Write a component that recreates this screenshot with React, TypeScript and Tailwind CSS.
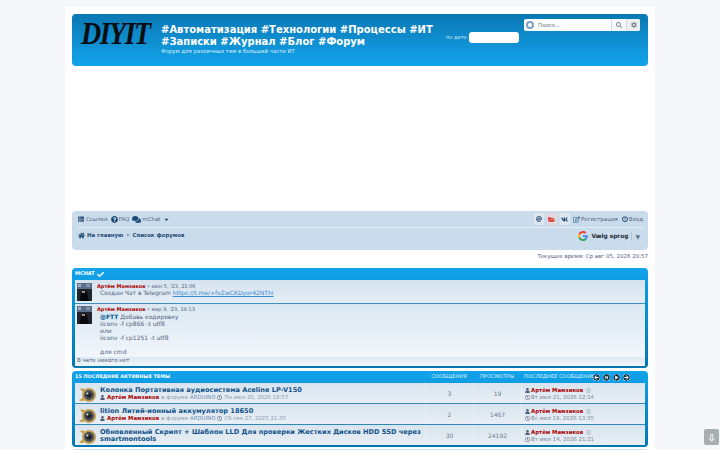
import { FaThList, FaQuestionCircle, FaComments, FaCaretDown, FaHome, FaAt, FaFolderOpen, FaVk, FaRegEdit, FaPowerOff, FaUser, FaRegClock, FaCheck, FaSearch, FaCog, FaRegFileAlt, FaArrowCircleLeft, FaArrowCircleRight, FaPauseCircle, FaPlayCircle } from "react-icons/fa";

const font = "font-['DejaVu_Sans',sans-serif]";

const Avatar = () => (
  <svg width="15" height="18" viewBox="0 0 15 18" className="shrink-0">
    <rect width="15" height="18" fill="#20242c" />
    <rect width="15" height="6" fill="#5d6f88" />
    <rect x="1" y="1" width="3" height="3" fill="#9fb0c6" />
    <rect x="9" y="1" width="4" height="3" fill="#8296b0" />
    <path d="M3 18 L4 10 Q7 5 10 9 L12 18 Z" fill="#07080c" />
    <rect x="5" y="8" width="3" height="2" fill="#a58f80" />
  </svg>
);

const TopicIcon = () => (
  <svg width="17" height="16" viewBox="0 0 17 16" className="shrink-0">
    <path d="M1 2 Q4 0 6 3 L5 6 Z" fill="#c9a24a" />
    <path d="M0 13 Q4 16 6 12 L5 10 Z" fill="#c9a24a" />
    <circle cx="10" cy="8" r="7" fill="#bd9c58" />
    <circle cx="10" cy="8" r="5" fill="#4a4f52" />
    <circle cx="10" cy="8" r="2.500" fill="#1b2026" />
    <circle cx="8.500" cy="6.500" r="1" fill="#dfe7ee" />
  </svg>
);

const Author = () => <span className="font-bold text-[#aa0000]">Артём Мамзиков</span>;

const chatGrad = "bg-gradient-to-b from-[#dbe7f1] to-[#f1f6fa]";

const topics = [
  { title: "Колонка Портативная аудиосистема Aceline LP-V150", date: "Пн июл 20, 2026 18:57", replies: 3, views: 19, last: "Вт июл 21, 2026 12:14" },
  { title: "lition Литий-ионный аккумулятор 18650", date: "Сб сен 27, 2025 21:35", replies: 2, views: 1467, last: "Вс июл 19, 2026 13:35" },
  { title: "Обновленный Скрипт + Шаблон LLD Для проверки Жестких Дисков HDD SSD через smartmontools", date: "", replies: 30, views: 24192, last: "Вт июл 14, 2026 21:21" },
];

export default function App() {
  return (
    <div className={`relative h-[450px] overflow-hidden bg-[#f5f7fa] pt-[7px] ${font}`}>
      <div className="mx-auto flex h-[460px] w-[590px] flex-col bg-white px-[7px] pt-[7px]">
        {/* header */}
        <header className="flex h-[52px] shrink-0 rounded-[4px] bg-gradient-to-b from-[#0b78b3] to-[#13a4ec] pl-[9px] pr-[8px]">
          <div className="mt-[3px] w-[80px] shrink-0 origin-center scale-y-[1.15] font-['Liberation_Serif',serif] text-[28px] font-bold italic leading-[36px] tracking-[-1.5px] text-[#0a0d12]">
            DIYIT
          </div>
          <div className="w-[285px] shrink-0 pt-[10px] text-white">
            <div className="whitespace-nowrap text-[10px] font-bold leading-[12px]">#Автоматизация #Технологии #Процессы #ИТ</div>
            <div className="whitespace-nowrap text-[10px] font-bold leading-[12px]">#Записки #Журнал #Блог #Форум</div>
            <div className="text-[5.4px] leading-[6px] text-[#dcefff]">Форум для различных тем в большей части ИТ</div>
          </div>
          <div className="mt-[18px] flex h-[11px] w-[73px] shrink-0 items-center justify-between">
            <span className="whitespace-nowrap text-[5px] text-[#d6ebfa]">по дате:</span>
            <div className="h-[11px] w-[50px] rounded-[3px] bg-white" />
          </div>
          <div className="ml-[5px] mt-[5px] flex h-[12px] w-[116px] items-center overflow-hidden rounded-[2px] bg-white text-[#6d7d8d]">
            <span className="ml-[2px] h-[8px] w-[8px] rounded-full border-[2px] border-[#7f9fc6]" />
            <span className="ml-[4px] flex-1 text-[5.5px]">Поиск...</span>
            <span className="flex h-full w-[15px] items-center justify-center border-l border-[#d5dde4] bg-[#f7f8f9]"><FaSearch className="h-[6px] w-[6px] text-[#7a8794]" /></span>
            <span className="flex h-full w-[14px] items-center justify-center border-l border-[#d5dde4] bg-[#eceff2]"><FaCog className="h-[6px] w-[6px] text-[#7a8794]" /></span>
          </div>
        </header>

        <div className="h-[145px] shrink-0" />

        {/* nav */}
        <nav className="h-[39px] shrink-0 rounded-[4px] bg-[#cadceb] pl-[6px] pr-[5px] text-[5.5px] text-[#536482]">
          <div className="flex h-[17px] items-center border-b border-[#e6eff6]">
            <span className="flex items-center gap-[2px]"><FaThList className="h-[6px] w-[6px] text-[#30507a]" />Ссылки</span>
            <span className="ml-[3px] flex items-center gap-[1px]"><FaQuestionCircle className="h-[7px] w-[7px] text-[#1b4a75]" />FAQ</span>
            <span className="ml-[3px] flex items-center gap-[1px]"><FaComments className="h-[9px] w-[9px] text-[#1b4a75]" />mChat<FaCaretDown className="ml-[1px] h-[7px] w-[7px] text-[#1b4a75]" /></span>
            <span className="ml-auto flex h-[12px] w-[10px] items-center justify-center bg-[#dde7f0]"><FaAt className="h-[6px] w-[6px] text-[#34547a]" /></span>
            <span className="ml-[3px] flex h-[12px] w-[10px] items-center justify-center bg-[#e3d9dc]"><FaFolderOpen className="h-[7px] w-[7px] text-[#d9352c]" /></span>
            <span className="ml-[3px] flex h-[12px] w-[10px] items-center justify-center bg-[#dde7f0]"><FaVk className="h-[7px] w-[7px] text-[#1f4c78]" /></span>
            <span className="ml-[3px] flex items-center gap-[1px]"><FaRegEdit className="h-[7px] w-[7px] text-[#2c5e90]" />Регистрация</span>
            <span className="ml-[4px] flex items-center gap-[1px]"><FaPowerOff className="h-[6px] w-[6px] text-[#1b4a75]" />Вход</span>
          </div>
          <div className="flex items-start justify-between pt-[3px]">
            <span className="flex items-center gap-[2px] text-[5.4px] font-bold text-[#1b4a75]"><FaHome className="h-[7px] w-[7px]" />На главную<span className="mx-[1px] font-normal">•</span>Список форумов</span>
            <span className="mr-[3px] flex items-center text-[5.8px] font-bold text-[#1f2b38]">
              <svg width="10" height="10" viewBox="0 0 48 48" className="mr-[3px]">
                <path fill="#EA4335" d="M24 9.500c3.500 0 6.700 1.200 9.200 3.600l6.900-6.900C35.900 2.400 30.500 0 24 0 14.600 0 6.500 5.400 2.600 13.200l8 6.200C12.500 13.700 17.800 9.500 24 9.500z" />
                <path fill="#4285F4" d="M47 24.500c0-1.600-.1-3.100-.4-4.500H24v9h12.900c-.6 3-2.200 5.500-4.700 7.200l7.700 6C44.400 38 47 31.800 47 24.500z" />
                <path fill="#FBBC05" d="M10.500 28.600C10 27.200 9.700 25.600 9.700 24s.3-3.200.8-4.600l-8-6.200C.9 16.400 0 20.100 0 24s.9 7.600 2.600 10.800l7.900-6.200z" />
                <path fill="#34A853" d="M24 48c6.500 0 11.900-2.100 15.900-5.800l-7.700-6c-2.200 1.500-4.900 2.300-8.200 2.300-6.200 0-11.500-4.200-13.400-9.900l-8 6.200C6.500 42.600 14.600 48 24 48z" />
              </svg>
              Vælg sprog
              <span className="ml-[3px] border-l border-[#b5c5d3] pl-[3px] text-[6px] font-normal text-[#667788]">▼</span>
            </span>
          </div>
        </nav>

        <div className="mt-[2px] h-[16px] shrink-0 text-right text-[5.5px] leading-[8px] text-[#536482]">Текущее время: Ср авг 05, 2026 20:57</div>

        {/* mchat */}
        <section className="h-[100px] shrink-0 rounded-[4px] bg-gradient-to-b from-[#12a3eb] to-[#0076b1] px-[3px]">
          <div className="flex h-[12px] items-center gap-[2px] text-[5px] font-bold text-white">
            MCHAT <FaCheck className="h-[7px] w-[7px]" />
          </div>
          <div className="h-[86px] bg-[#dfe9f2] text-[#536482]">
            <div className="flex h-[24px] gap-[5px] border-b border-[#3e8fb8] bg-gradient-to-b from-[#d6e3ef] to-[#e4edf5] pl-[2px] pt-[3px]">
              <Avatar />
              <div className="leading-[7px]">
                <div className="text-[5px]"><Author /> • июн 5, '23, 21:06</div>
                <div className="ml-[3px] -mt-[1px] text-[6px]">Создан Чат в Telegram <span className="text-[#368ad2] underline">https://t.me/+fvZwCKDyor42NThi</span></div>
              </div>
            </div>
            <div className={`flex h-[53px] gap-[5px] ${chatGrad} pl-[2px] pt-[2px]`}>
              <Avatar />
              <div className="leading-[7px]">
                <div className="text-[5px]"><Author /> • мар 9, '23, 19:13</div>
                <div className="ml-[3px] text-[6px]">
                  <div><span className="bg-[#d0e8f8] font-bold text-[#105289]">@FTT</span> Добавь кодировку</div>
                  <div>iiconv -f cp866 -t utf8</div>
                  <div>или</div>
                  <div>iiconv -f cp1251 -t utf8</div>
                  <div className="h-[7px]" />
                  <div>для cmd</div>
                </div>
              </div>
            </div>
            <div className={`h-[9px] pl-[2px] text-[5.5px] leading-[7px] text-[#4c5d77] ${chatGrad}`}>В чате никого нет</div>
          </div>
        </section>

        {/* topics */}
        <section className="mt-[3px] h-[76px] shrink-0 rounded-[4px] bg-gradient-to-b from-[#12a3eb] to-[#0076b1] px-[3px]">
          <div className="flex h-[12px] items-center text-[5.2px] text-[#d8edfa]">
            <span className="w-[350px] text-[4.9px] font-bold text-white">15 ПОСЛЕДНИЕ АКТИВНЫЕ ТЕМЫ</span>
            <span className="w-[48px] text-center">СООБЩЕНИЯ</span>
            <span className="w-[48px] text-center">ПРОСМОТРЫ</span>
            <span className="ml-[3px] w-[69px] overflow-hidden whitespace-nowrap">ПОСЛЕДНЕЕ СООБЩЕНИЕ</span>
            <span className="flex gap-[3px] text-[#12384f]">
              <FaArrowCircleLeft className="h-[7px] w-[7px] rounded-full bg-white" />
              <FaPauseCircle className="h-[7px] w-[7px] rounded-full bg-white" />
              <FaPlayCircle className="h-[7px] w-[7px] rounded-full bg-white" />
              <FaArrowCircleRight className="h-[7px] w-[7px] rounded-full bg-white" />
            </span>
          </div>
          <ul className="text-[#4c5d77]">
            {topics.map((t) => (
              <li key={t.title} className="flex h-[21px] border-b border-[#2f88b5] bg-gradient-to-b from-[#d9e4ee] to-[#e8eff5] last:h-[20px] last:border-b-0">
                <div className="flex w-[350px] shrink-0 gap-[4px] pl-[4px]">
                  <div className="mt-[4px]"><TopicIcon /></div>
                  <div className="pt-[4px]">
                    <div className="text-[6.6px] font-bold leading-[7px] text-[#105289]">{t.title}</div>
                    {t.date && (
                      <div className="flex items-center gap-[2px] text-[5.4px] leading-[6px] text-[#8a9bb0]">
                        <FaUser className="h-[5px] w-[5px] text-[#4c5d77]" /><Author /> в форуме <span className="text-[#6f8db0]">ARDUINO</span>
                        <FaRegClock className="h-[5px] w-[5px] text-[#4c5d77]" /> {t.date}
                      </div>
                    )}
                  </div>
                </div>
                <div className="flex w-[48px] shrink-0 items-center justify-center border-l border-[#e8eff5] text-[6px] text-[#6d7d8d]">{t.replies}</div>
                <div className="flex w-[48px] shrink-0 items-center justify-center border-l border-[#e8eff5] text-[6px] text-[#6d7d8d]">{t.views}</div>
                <div className="border-l border-[#e8eff5] pl-[3px] pt-[4px] text-[5.4px] leading-[7px]">
                  <div className="flex items-center gap-[1px]"><FaUser className="h-[5px] w-[5px] text-[#4c5d77]" /><Author /><FaRegFileAlt className="ml-[2px] h-[5px] w-[5px] text-[#a0adb8]" /></div>
                  <div className="flex items-center gap-[1px] text-[#7a8a9c]"><FaRegClock className="h-[5px] w-[5px] text-[#4c5d77]" /> {t.last}</div>
                </div>
              </li>
            ))}
          </ul>
        </section>
        <div className="mt-[2px] h-[8px] shrink-0 rounded-t-[4px] bg-[#cfe2ee]" />
      </div>

      <div className="absolute bottom-[5px] right-[1px] flex h-[16px] w-[15px] items-center justify-center rounded-[2px] bg-[#a9aeaf] text-[10px] font-bold text-white">⇩</div>
    </div>
  );
}
